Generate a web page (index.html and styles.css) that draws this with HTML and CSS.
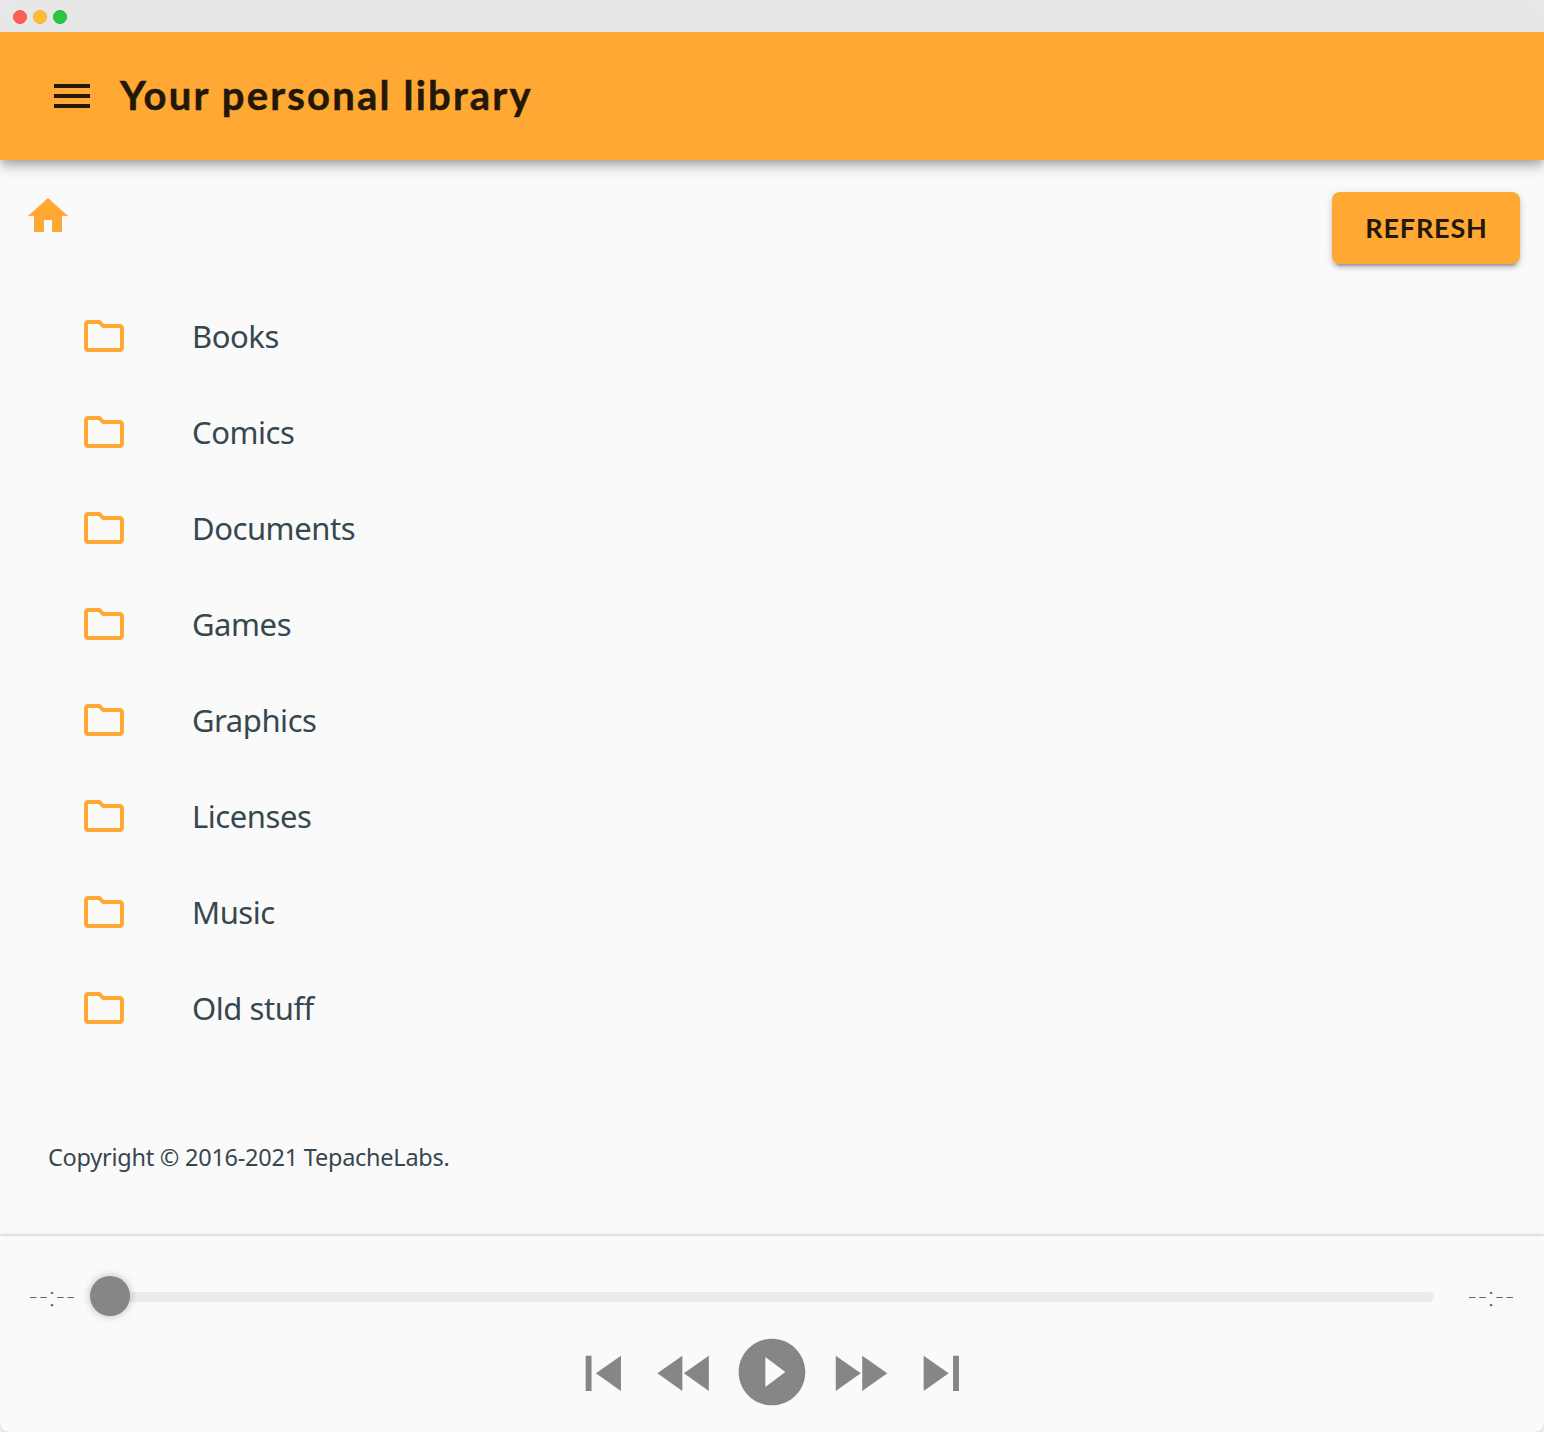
FILE: index.html
```html
<!DOCTYPE html>
<html lang="en">
<head>
<meta charset="utf-8">
<title>Your personal library</title>
<link rel="stylesheet" href="styles.css">
</head>
<body>
<svg width="0" height="0" class="defs">
  <symbol id="folder" viewBox="0 0 24 24"><path d="M9.17 6l2 2H20v10H4V6h5.17M10 4H4c-1.1 0-1.99.9-1.99 2L2 18c0 1.1.9 2 2 2h16c1.1 0 2-.9 2-2V8c0-1.1-.9-2-2-2h-8l-2-2z"/></symbol>
</svg>
<div class="window">
  <div class="titlebar"><i class="dot red"></i><i class="dot yellow"></i><i class="dot green"></i></div>
  <header class="appbar">
    <svg class="icon" viewBox="0 0 24 24"><path d="M3 18h18v-2H3v2zm0-5h18v-2H3v2zm0-7v2h18V6H3z"/></svg>
    <h1 class="title">Your personal library</h1>
  </header>
  <main class="content">
    <div class="toolbar">
      <svg class="icon accent" viewBox="0 0 24 24"><path d="M10 20v-6h4v6h5v-8h3L12 3 2 12h3v8z"/></svg>
      <button class="refresh">REFRESH</button>
    </div>
    <ul class="list">
      <li><svg class="icon accent"><use href="#folder"/></svg><span>Books</span></li>
      <li><svg class="icon accent"><use href="#folder"/></svg><span>Comics</span></li>
      <li><svg class="icon accent"><use href="#folder"/></svg><span>Documents</span></li>
      <li><svg class="icon accent"><use href="#folder"/></svg><span>Games</span></li>
      <li><svg class="icon accent"><use href="#folder"/></svg><span>Graphics</span></li>
      <li><svg class="icon accent"><use href="#folder"/></svg><span>Licenses</span></li>
      <li><svg class="icon accent"><use href="#folder"/></svg><span>Music</span></li>
      <li><svg class="icon accent"><use href="#folder"/></svg><span>Old stuff</span></li>
    </ul>
    <p class="copyright">Copyright © 2016-2021 TepacheLabs.</p>
  </main>
  <footer class="player">
    <div class="progress">
      <span class="time">--:--</span>
      <div class="track"><div class="thumb"></div></div>
      <span class="time">--:--</span>
    </div>
    <div class="controls">
      <svg class="ctl" viewBox="0 0 24 24"><path d="M6 6h2v12H6zm3.5 6l8.5 6V6z"/></svg>
      <svg class="ctl" viewBox="0 0 24 24"><path d="M11 18V6l-8.5 6 8.5 6zm.5-6l8.5 6V6l-8.5 6z"/></svg>
      <svg class="play" viewBox="0 0 24 24"><path d="M12 2C6.48 2 2 6.48 2 12s4.48 10 10 10 10-4.48 10-10S17.52 2 12 2zm-2 14.5v-9l6 4.5-6 4.5z"/></svg>
      <svg class="ctl" viewBox="0 0 24 24"><path d="M4 18l8.5-6L4 6v12zm9-12v12l8.5-6L13 6z"/></svg>
      <svg class="ctl" viewBox="0 0 24 24"><path d="M6 18l8.5-6L6 6v12zM16 6v12h2V6h-2z"/></svg>
    </div>
  </footer>
</div>
</body>
</html>
```
FILE: styles.css
```css
* { box-sizing: border-box; }
body { margin: 0; background: #e9e9e9; font-family: "Noto Sans", sans-serif; color: #37474f; }
.defs { display: block; }
.window {
  display: flex; flex-direction: column;
  width: 1544px; height: 1432px;
  background: #fafafa; border-radius: 10px; overflow: hidden;
}
.titlebar { position: relative; z-index: 1; display: flex; align-items: center; gap: 6px; height: 32px; flex: none; padding: 2px 13px 0; background: #e7e7e7; }
.dot { width: 14px; height: 14px; border-radius: 50%; border: 1px solid; }
.red { background: #ff5f57; border-color: #f0544e; }
.yellow { background: #ffbd2e; border-color: #eaab3a; }
.green { background: #28c940; border-color: #1fb43a; }
.appbar {
  display: flex; align-items: center; gap: 24px; height: 128px; flex: none;
  padding: 0 48px; background: #ffa834; color: #221708; position: relative;
  box-shadow: 0 4px 8px -2px rgba(0,0,0,.2), 0 8px 10px rgba(0,0,0,.14), 0 2px 20px rgba(0,0,0,.12);
}
.icon { width: 48px; height: 48px; fill: currentColor; flex: none; }
.accent { fill: #ffa834; }
.title { margin: -2px 0 0; font: 700 40px/52px Lato, sans-serif; letter-spacing: 2.2px; -webkit-text-stroke: .5px; stroke-linejoin: round; }
.content { flex: none; height: 1076px; }
.toolbar { display: flex; justify-content: space-between; align-items: flex-start; padding: 32px 24px 0; height: 128px; }
.refresh {
  width: 188px; height: 72px; padding: 0; border: 0; border-radius: 8px;
  background: #ffa834; color: #221708; font: 700 27px/72px Lato, sans-serif; letter-spacing: .8px; text-indent: 1px;
  box-shadow: 0 6px 2px -4px rgba(0,0,0,.2), 0 4px 4px rgba(0,0,0,.14), 0 2px 10px rgba(0,0,0,.12);
}
.list { list-style: none; margin: 0; padding: 0 80px; }
.list li { display: flex; align-items: center; gap: 64px; height: 96px; font-size: 31px; line-height: 48px; letter-spacing: -.45px; }
.copyright { margin: 83px 48px 0; font-size: 23.5px; line-height: 36px; letter-spacing: -.25px; }
.player { position: relative; height: 196px; flex: none; padding-top: 36px; background: #fafafa; box-shadow: 0 0 4px rgba(0,0,0,.3); }
.progress { display: flex; align-items: center; height: 48px; padding: 0 30px 0 28px; }
.time { width: 82px; flex: none; margin-top: -2px; font: 100 28px/48px Lato, sans-serif; white-space: nowrap; -webkit-text-stroke: .4px; }
.time:last-child { width: 47px; margin-left: 33px; }
.track { flex: 1; display: flex; align-items: center; height: 10px; margin-top: 2px; border-radius: 5px; background: #ebebeb; }
.thumb { width: 40px; height: 40px; margin: -2px 0 0 -20px; border-radius: 50%; background: #868686; box-shadow: 0 0 8px rgba(0,0,0,.25); }
.controls { display: flex; justify-content: center; align-items: center; gap: 11.5px; height: 80px; margin-top: 12px; fill: #868686; }
.ctl { width: 70.6px; height: 70.6px; margin-top: 2px; }
.play { width: 80px; height: 80px; }
```
